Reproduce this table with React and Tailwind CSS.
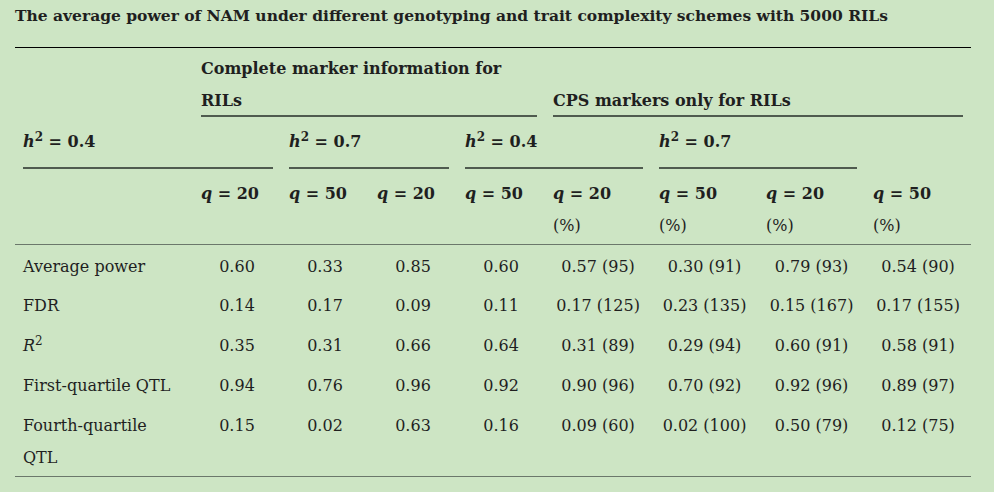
const rows = [
  { label: 'Average power', vals: ['0.60', '0.33', '0.85', '0.60', '0.57 (95)', '0.30 (91)', '0.79 (93)', '0.54 (90)'] },
  { label: 'FDR', vals: ['0.14', '0.17', '0.09', '0.11', '0.17 (125)', '0.23 (135)', '0.15 (167)', '0.17 (155)'] },
  {
    label: (
      <>
        <i>R</i>
        <sup>2</sup>
      </>
    ),
    vals: ['0.35', '0.31', '0.66', '0.64', '0.31 (89)', '0.29 (94)', '0.60 (91)', '0.58 (91)'],
  },
  { label: 'First-quartile QTL', vals: ['0.94', '0.76', '0.96', '0.92', '0.90 (96)', '0.70 (92)', '0.92 (96)', '0.89 (97)'] },
  { label: 'Fourth-quartile QTL', vals: ['0.15', '0.02', '0.63', '0.16', '0.09 (60)', '0.02 (100)', '0.50 (79)', '0.12 (75)'] },
];

const qHeads = ['20', '50', '20', '50', '20', '50', '20', '50'];

function H2({ v }) {
  return (
    <div className="pb-[9px] border-b-2 border-[#4f5b4f]">
      <i>h</i>
      <sup>2</sup> = {v}
    </div>
  );
}

function cellPad(ri) {
  if (ri === 0) return 'pt-[6px] pb-[2px]';
  if (ri === rows.length - 1) return 'pt-[5px] pb-[2px]';
  return 'pt-[5px] pb-[3px]';
}

export default function App() {
  return (
    <div className="min-h-screen bg-[#cde5c4] text-[#1f1f1f] font-['DejaVu_Serif',serif] pl-[15px] pt-[4px]">
      <h1 className="font-bold text-[15.5px] leading-[24px]">
        The average power of NAM under different genotyping and trait complexity schemes with 5000 RILs
      </h1>

      <div className="mt-[19px] w-[956px] border-t border-black border-b border-b-[#6b786b]">
        <table className="table-fixed w-[956px] border-collapse text-[16px]">
          <colgroup>
            <col className="w-[178px]" />
            <col className="w-[88px]" />
            <col className="w-[88px]" />
            <col className="w-[88px]" />
            <col className="w-[88px]" />
            <col className="w-[106px]" />
            <col className="w-[107px]" />
            <col className="w-[107px]" />
            <col className="w-[106px]" />
          </colgroup>
          <thead className="font-bold text-left leading-[32px]">
            <tr>
              <th className="px-2 pt-[5px]" />
              <th colSpan={4} className="px-2 pt-[5px] align-bottom">
                <div className="border-b-2 border-[#4f5b4f]">
                  <div className="-mb-[2px]">Complete marker information for RILs</div>
                </div>
              </th>
              <th colSpan={4} className="px-2 pt-[5px] align-bottom">
                <div className="border-b-2 border-[#4f5b4f]">
                  <div className="-mb-[2px]">CPS markers only for RILs</div>
                </div>
              </th>
            </tr>
            <tr>
              <th colSpan={2} className="px-2 pt-[9px]">
                <H2 v="0.4" />
              </th>
              <th colSpan={2} className="px-2 pt-[9px]">
                <H2 v="0.7" />
              </th>
              <th colSpan={2} className="px-2 pt-[9px]">
                <H2 v="0.4" />
              </th>
              <th colSpan={2} className="px-2 pt-[9px]">
                <H2 v="0.7" />
              </th>
              <th />
            </tr>
            <tr>
              <th className="px-2 border-b border-[#6b786b]" />
              {qHeads.map((q, i) => (
                <th key={i} className="px-2 pt-[9px] pb-[2px] align-top border-b border-[#6b786b]">
                  <div>
                    <i>q</i> = {q}
                  </div>
                  {i >= 4 && <div className="font-normal">(%)</div>}
                </th>
              ))}
            </tr>
          </thead>
          <tbody className="leading-[32px]">
            {rows.map((r, ri) => (
              <tr key={ri}>
                <td className={`px-2 align-top ${cellPad(ri)}`}>{r.label}</td>
                {r.vals.map((v, i) => (
                  <td key={i} className={`px-1 align-top text-center whitespace-nowrap ${cellPad(ri)}`}>
                    {v}
                  </td>
                ))}
              </tr>
            ))}
          </tbody>
        </table>
      </div>
    </div>
  );
}
